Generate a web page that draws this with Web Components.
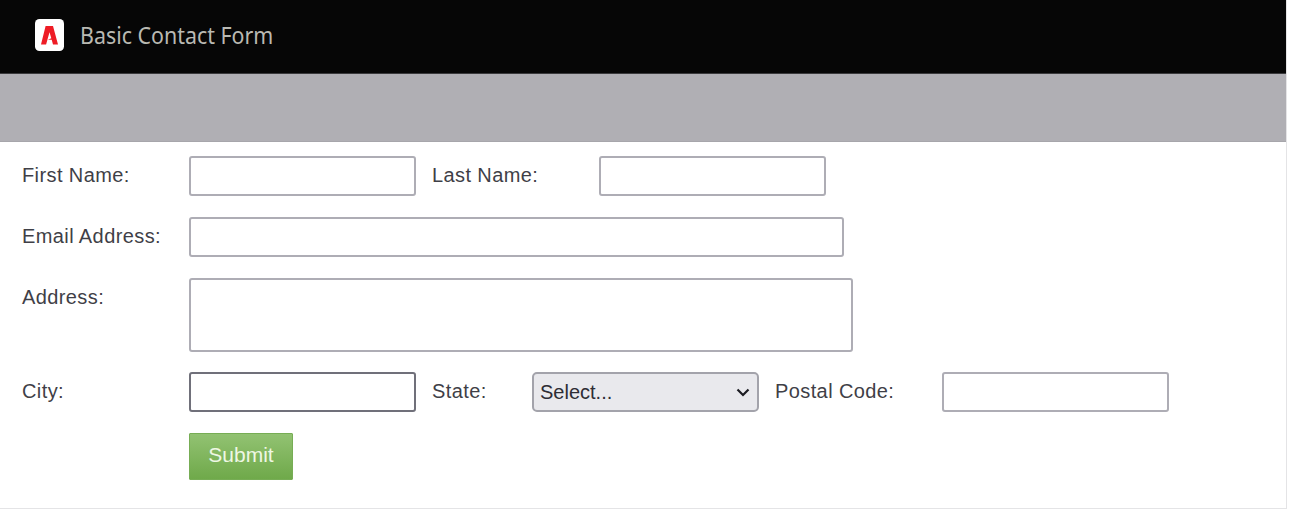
<!DOCTYPE html>
<html lang="en">
<head>
<meta charset="utf-8">
<title>Basic Contact Form</title>
<style>
html,body{margin:0;padding:0;background:#fff}
body{font-family:"Liberation Sans",Arial,sans-serif;overflow:hidden}
</style>
</head>
<body>
<template id="t-shell">
<style>
:host{display:block;width:1287px;height:509px;box-sizing:border-box;border-right:1px solid #e4e4e6;border-bottom:1px solid #e4e4e6;background:#fff}
</style>
<slot></slot>
</template>
<template id="t-header">
<style>
:host{display:flex;align-items:center;height:74px;box-sizing:border-box;padding:0 0 4px 35px;gap:16px;background:#060606;border-bottom:1px solid #3a3a3c}
.logo{width:29px;height:32px;flex:none;display:block}
.title{font:23px/30px "Noto Sans","Open Sans",sans-serif;color:#b9b9b2;transform:scaleX(.93);transform-origin:left center;white-space:nowrap}
</style>
<svg class="logo" viewBox="0 0 29 32" aria-hidden="true">
<rect width="29" height="32" rx="4.5" fill="#fff"/>
<path fill="#ee1c25" d="M10.6 7h7.4L23 25.4h-5l-1.3-4.6h-3.8l3.4-1.5-1.8-6.1-3.4 12.2H6z"/>
</svg>
<span class="title"><slot></slot></span>
</template>
<template id="t-band">
<style>
:host{display:block;height:68px;box-sizing:border-box;background:#b0afb4;border-bottom:1px solid #a7a6ab}
</style>
</template>
<template id="t-form">
<style>
:host{display:flex;flex-direction:column;padding:14px 0 0 22px;font:20px/24px "Liberation Sans",Arial,sans-serif;color:#3f3f47}
</style>
<slot></slot>
</template>
<template id="t-row">
<style>
:host{display:flex;align-items:flex-start;gap:16px;margin-bottom:var(--row-gap,21px)}
</style>
<slot></slot>
</template>
<template id="t-label">
<style>
:host{display:block;flex:none;box-sizing:border-box;width:var(--w,167px);margin-right:-16px;padding-top:7px;letter-spacing:.02em;white-space:nowrap}
:host(.narrow){--w:100px}
:host(.first){--w:167px}
</style>
<slot></slot>
</template>
<template id="t-field">
<style>
:host{display:block;flex:none;width:var(--w,227px);height:var(--h,40px)}
input,textarea,select{display:block;width:100%;height:100%;box-sizing:border-box;margin:0;border:2px solid #aeadb5;border-radius:3px;background:#fff;outline:none;resize:none;padding:0 6px;font:20px "Liberation Sans",Arial,sans-serif;color:#2d2d35}
:host([focus]) input{border-color:#70707a}
select{background:#e9e9ed;border-color:#a3a3ab;border-radius:5px;appearance:none;-webkit-appearance:none;padding:0 0 0 6px}
.wrap{position:relative;height:100%}
svg{position:absolute;right:9px;top:16px;width:14px;height:9px;pointer-events:none}
</style>
<div class="wrap" id="w"></div>
</template>
<template id="t-submit">
<style>
:host{display:block;flex:none}
button{display:block;width:104px;height:47px;box-sizing:border-box;border:1px solid #77ad55;border-radius:1px;background:linear-gradient(#92c272,#6fa94a);color:#eef7e4;font:21px "Liberation Sans",Arial,sans-serif;padding:0 0 3px;transform-origin:center}
</style>
<button type="button"><slot></slot></button>
</template>

<contact-shell>
  <app-header>Basic Contact Form</app-header>
  <sub-band></sub-band>
  <contact-form>
    <form-row>
      <form-label>First Name:</form-label>
      <form-field></form-field>
      <form-label>Last Name:</form-label>
      <form-field></form-field>
    </form-row>
    <form-row>
      <form-label>Email Address:</form-label>
      <form-field style="--w:655px" type="email"></form-field>
    </form-row>
    <form-row style="--row-gap:20px">
      <form-label>Address:</form-label>
      <form-field style="--w:664px;--h:74px" kind="textarea"></form-field>
    </form-row>
    <form-row>
      <form-label>City:</form-label>
      <form-field focus></form-field>
      <form-label class="narrow">State:</form-label>
      <form-field kind="select"></form-field>
      <form-label>Postal Code:</form-label>
      <form-field></form-field>
    </form-row>
    <form-row style="padding-left:167px">
      <form-submit>Submit</form-submit>
    </form-row>
  </contact-form>
</contact-shell>

<script>
function simple(name,tpl,extra){
  customElements.define(name,class extends HTMLElement{
    constructor(){super();this.attachShadow({mode:"open"}).appendChild(document.getElementById(tpl).content.cloneNode(true));}
    connectedCallback(){if(extra)extra(this);}
  });
}
simple("contact-shell","t-shell");
simple("app-header","t-header");
simple("sub-band","t-band");
simple("contact-form","t-form");
simple("form-row","t-row");
simple("form-label","t-label");
simple("form-submit","t-submit");
simple("form-field","t-field",function(el){
  const w=el.shadowRoot.getElementById("w");
  if(w.firstChild)return;
  const kind=el.getAttribute("kind");
  if(kind==="textarea"){w.appendChild(document.createElement("textarea"));}
  else if(kind==="select"){
    const s=document.createElement("select");
    const o=document.createElement("option");o.textContent="Select...";s.appendChild(o);
    w.appendChild(s);
    w.insertAdjacentHTML("beforeend",'<svg viewBox="0 0 14 9"><path d="M1.5 1.5 7 7l5.5-5.5" fill="none" stroke="#1c1c22" stroke-width="2.2"/></svg>');
  } else {
    const i=document.createElement("input");i.type=el.getAttribute("type")||"text";w.appendChild(i);
  }
});
</script>
</body>
</html>
